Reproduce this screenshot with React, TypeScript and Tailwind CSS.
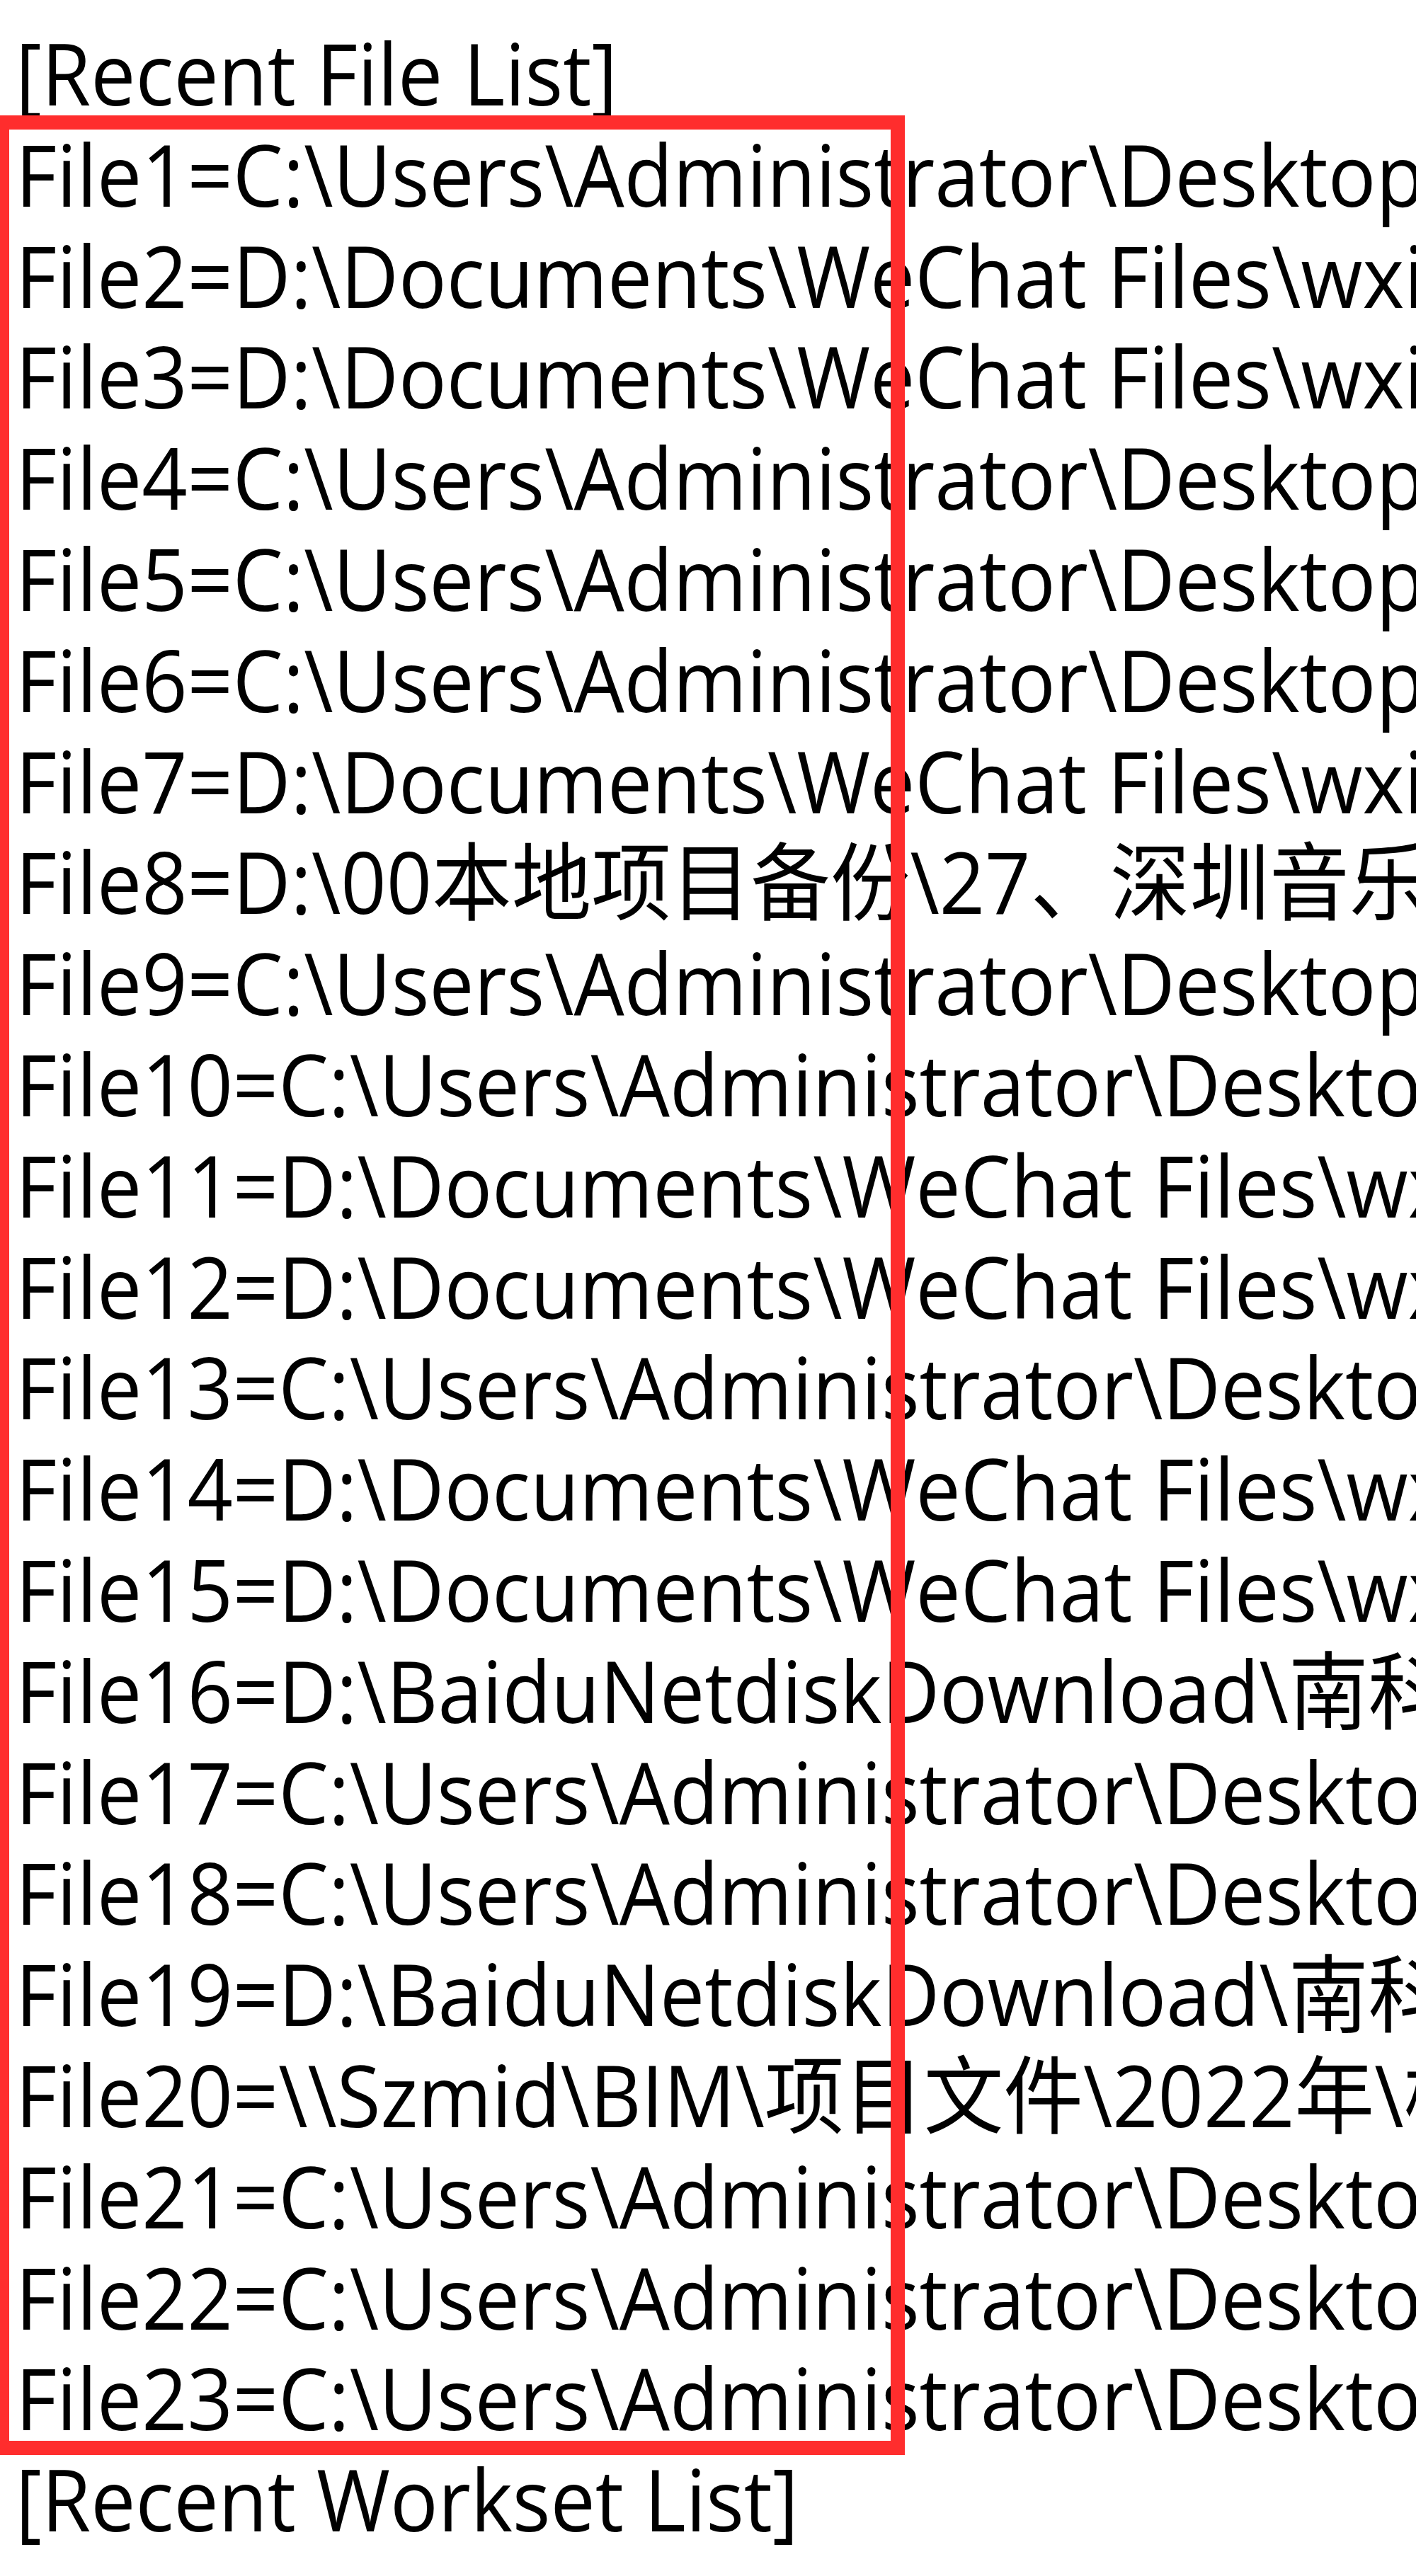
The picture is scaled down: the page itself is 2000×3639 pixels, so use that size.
import React from "react";

const lines: string[] = [
  "[Recent File List]",
  "File1=C:\\Users\\Administrator\\Desktop\\项目\\模型.rvt",
  "File2=D:\\Documents\\WeChat Files\\wxid_file\\FileStorage",
  "File3=D:\\Documents\\WeChat Files\\wxid_file\\FileStorage",
  "File4=C:\\Users\\Administrator\\Desktop\\项目\\模型.rvt",
  "File5=C:\\Users\\Administrator\\Desktop\\项目\\模型.rvt",
  "File6=C:\\Users\\Administrator\\Desktop\\项目\\模型.rvt",
  "File7=D:\\Documents\\WeChat Files\\wxid_file\\FileStorage",
  "File8=D:\\00本地项目备份\\27、深圳音乐学院\\模型",
  "File9=C:\\Users\\Administrator\\Desktop\\项目\\模型.rvt",
  "File10=C:\\Users\\Administrator\\Desktop\\项目\\模型.rvt",
  "File11=D:\\Documents\\WeChat Files\\wxid_file\\FileStorage",
  "File12=D:\\Documents\\WeChat Files\\wxid_file\\FileStorage",
  "File13=C:\\Users\\Administrator\\Desktop\\项目\\模型.rvt",
  "File14=D:\\Documents\\WeChat Files\\wxid_file\\FileStorage",
  "File15=D:\\Documents\\WeChat Files\\wxid_file\\FileStorage",
  "File16=D:\\BaiduNetdiskDownload\\南科大\\模型.rvt",
  "File17=C:\\Users\\Administrator\\Desktop\\项目\\模型.rvt",
  "File18=C:\\Users\\Administrator\\Desktop\\项目\\模型.rvt",
  "File19=D:\\BaiduNetdiskDownload\\南科大\\模型.rvt",
  "File20=\\\\Szmid\\BIM\\项目文件\\2022年\\模型.rvt",
  "File21=C:\\Users\\Administrator\\Desktop\\项目\\模型.rvt",
  "File22=C:\\Users\\Administrator\\Desktop\\项目\\模型.rvt",
  "File23=C:\\Users\\Administrator\\Desktop\\项目\\模型.rvt",
  "[Recent Workset List]",
];

export default function App() {
  return (
    <div className="relative w-[2000px] h-[3639px] overflow-hidden bg-white">
      <div
        className="flex flex-col pt-[32px] pl-[22px] text-[120px] leading-[142.8px] text-black"
        style={{ fontFamily: '"Open Sans", "Noto Sans CJK SC", sans-serif' }}
      >
        {lines.map((t, i) => (
          <div key={i} className="whitespace-nowrap origin-left scale-x-[0.938]">
            {t}
          </div>
        ))}
      </div>
      <div className="absolute left-[-7px] top-[163px] w-[1285px] h-[3305px] border-[20px] border-[#ff2d2d]" />
    </div>
  );
}
